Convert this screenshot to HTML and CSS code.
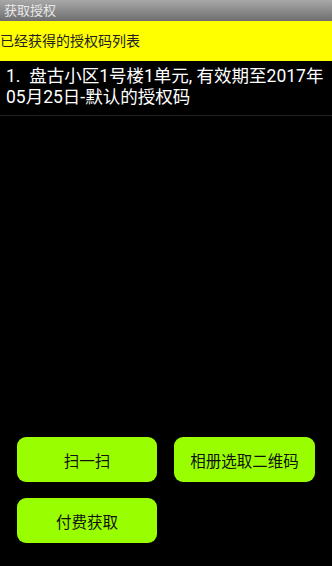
FILE: index.html
```html
<!DOCTYPE html>
<html lang="zh-CN">
<head>
    <meta charset="UTF-8">
    <meta name="viewport" content="width=device-width, initial-scale=1.0">
    <title>获取授权</title>
    <link rel="stylesheet" href="styles.css">
</head>
<body>
    <div class="screen">
        <div class="title-bar">获取授权</div>
        <div class="list-header">已经获得的授权码列表</div>
        <div class="code-list">
            <div class="code-item">1.&nbsp; 盘古小区1号楼1单元, 有效期至2017年05月25日-默认的授权码</div>
        </div>
        <div class="actions">
            <button class="action-button">扫一扫</button>
            <button class="action-button">相册选取二维码</button>
            <button class="action-button">付费获取</button>
        </div>
    </div>
</body>
</html>
```
FILE: styles.css
```css
html, body {
    margin: 0;
    padding: 0;
    height: 100%;
    background-color: #000;
}
body {
    font-family: Roboto, "Noto Sans CJK SC", sans-serif;
    color: #fff;
}
.screen {
    display: flex;
    flex-direction: column;
    height: 100%;
}
.title-bar {
    height: 21px;
    line-height: 21px;
    padding-left: 4px;
    font-size: 13px;
    color: #e8e8e8;
    background: linear-gradient(#a8a8a8, #6e6e6e);
}
.list-header {
    height: 40px;
    line-height: 40px;
    font-size: 14px;
    color: #222;
    background-color: #ffff00;
}
.code-list {
    flex: 1;
}
.code-item {
    padding: 5px 6px 7px 6px;
    font-size: 17.5px;
    line-height: 21px;
    border-bottom: 1px solid #222;
}
.actions {
    display: grid;
    grid-template-columns: 140px 141px;
    gap: 16px 17px;
    padding: 0 17px 23px 17px;
}
.action-button {
    height: 45px;
    border: none;
    border-radius: 9px;
    background-color: #99ff00;
    color: #111;
    font-family: Roboto, "Noto Sans CJK SC", sans-serif;
    font-size: 15.5px;
    padding: 0;
}
```
